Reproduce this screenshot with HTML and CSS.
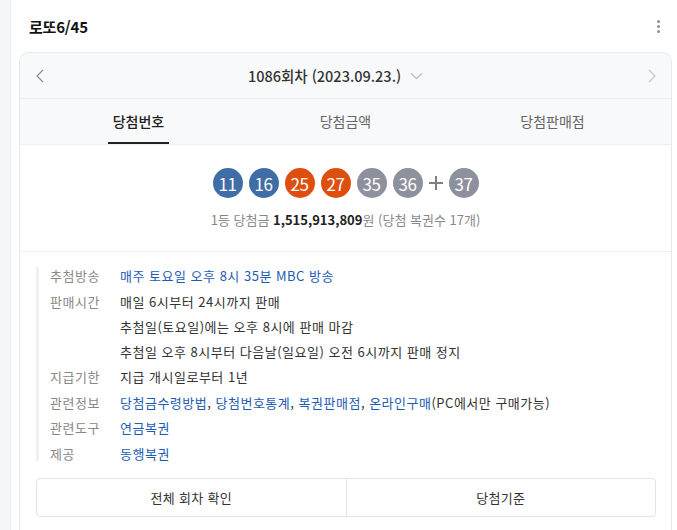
FILE: index.html
```html
<!DOCTYPE html>
<html lang="ko">
<head>
<meta charset="utf-8">
<link rel="stylesheet" href="styles.css">
</head>
<body>
<div class="page">
  <div class="side"></div>
  <div class="main">
    <div class="title-row">
      <h1 class="title">로또6/45</h1>
      <span class="kebab"><i></i><i></i><i></i></span>
    </div>
    <div class="card">
      <div class="draw-head">
        <svg class="arrow" width="8" height="14" viewBox="0 0 8 14"><path d="M7 1 1 7l6 6" fill="none" stroke="#8a8d93" stroke-width="1.2"/></svg>
        <div class="draw-title">
          <span>1086회차 (2023.09.23.)</span>
          <svg width="13" height="8" viewBox="0 0 13 8"><path d="M1 1.5 6.5 6.5 12 1.5" fill="none" stroke="#b8bbc0" stroke-width="1.2"/></svg>
        </div>
        <svg class="arrow" width="8" height="14" viewBox="0 0 8 14"><path d="M1 1l6 6-6 6" fill="none" stroke="#c3c6cb" stroke-width="1.2"/></svg>
      </div>
      <div class="tabs">
        <div class="tab active"><span>당첨번호</span></div>
        <div class="tab"><span>당첨금액</span></div>
        <div class="tab"><span>당첨판매점</span></div>
      </div>
      <div class="result">
        <div class="balls">
          <span class="ball blue">11</span>
          <span class="ball blue">16</span>
          <span class="ball red">25</span>
          <span class="ball red">27</span>
          <span class="ball gray">35</span>
          <span class="ball gray">36</span>
          <svg class="plus" width="14" height="14" viewBox="0 0 14 14"><path d="M7 0v14M0 7h14" stroke="#7d7f84" stroke-width="2"/></svg>
          <span class="ball gray">37</span>
        </div>
        <p class="prize">1등 당첨금 <b>1,515,913,809</b>원 (당첨 복권수 17개)</p>
      </div>
      <div class="info">
        <div class="row"><span class="label">추첨방송</span><div class="val"><span class="link">매주 토요일 오후 8시 35분 MBC 방송</span></div></div>
        <div class="row"><span class="label">판매시간</span><div class="val">매일 6시부터 24시까지 판매<br>추첨일(토요일)에는 오후 8시에 판매 마감<br>추첨일 오후 8시부터 다음날(일요일) 오전 6시까지 판매 정지</div></div>
        <div class="row"><span class="label">지급기한</span><div class="val">지급 개시일로부터 1년</div></div>
        <div class="row"><span class="label">관련정보</span><div class="val"><span class="link">당첨금수령방법</span>, <span class="link">당첨번호통계</span>, <span class="link">복권판매점</span>, <span class="link">온라인구매</span>(PC에서만 구매가능)</div></div>
        <div class="row"><span class="label">관련도구</span><div class="val"><span class="link">연금복권</span></div></div>
        <div class="row"><span class="label">제공</span><div class="val"><span class="link">동행복권</span></div></div>
      </div>
      <div class="buttons">
        <div class="btn">전체 회차 확인</div>
        <div class="btn">당첨기준</div>
      </div>
    </div>
  </div>
</div>
</body>
</html>
```
FILE: styles.css
```css
* { box-sizing: border-box; }
html, body { margin: 0; padding: 0; }
body {
  font-family: "Noto Sans CJK KR", "Noto Sans", sans-serif;
  background: #fff;
  color: #222;
  height: 530px;
  overflow: hidden;
}
.page { display: flex; min-height: 530px; }
.side {
  width: 11px;
  flex: none;
  background: #f5f6f8;
  border-right: 1px solid #eceef1;
}
.main { flex: 1; padding: 0 5px 0 8px; }
.title-row {
  height: 52px;
  display: flex;
  align-items: center;
  justify-content: space-between;
  padding: 0 12px 0 10px;
}
.title { margin: 0; font-size: 15px; font-weight: 700; color: #111; letter-spacing: -0.2px; }
.kebab { display: flex; flex-direction: column; gap: 2px; }
.kebab i { display: block; width: 3px; height: 3px; border-radius: 50%; background: #8b8e94; }
.card {
  border: 1px solid #e6e8eb;
  border-bottom: none;
  border-radius: 10px 10px 0 0;
  min-height: 478px;
}
.draw-head {
  height: 46px;
  display: flex;
  align-items: center;
  padding: 0 15px 0 16px;
  background: #f8f9fa;
  border-radius: 10px 10px 0 0;
  border-bottom: 1px solid #eceef0;
}
.arrow { flex: none; }
.draw-title {
  flex: 1;
  display: flex;
  align-items: center;
  justify-content: center;
  gap: 9px;
  padding-right: 21px;
  font-size: 14.5px;
  font-weight: 500;
  color: #333;
}
.tabs {
  display: flex;
  padding: 0 15px;
  height: 46px;
  background: #f8f9fa;
  border-bottom: 1px solid #eceef0;
}
.tab {
  flex: 1;
  display: flex;
  justify-content: center;
}
.tab span {
  display: flex;
  align-items: center;
  padding: 0 5px;
  font-size: 14px;
  color: #666;
  border-bottom: 2px solid transparent;
}
.tab.active span { color: #222; font-weight: 500; border-bottom-color: #222; }
.result {
  background: #fff;
  padding-top: 23px;
  height: 107px;
  border-bottom: 1px solid #eceef0;
}
.balls { display: flex; justify-content: center; align-items: center; gap: 6px; }
.ball {
  width: 30px; height: 30px;
  border-radius: 50%;
  display: flex; align-items: center; justify-content: center;
  color: #fff;
  font-size: 17px;
  letter-spacing: -0.5px;
}
.ball.blue { background: #3f6ea6; }
.ball.red { background: #de4f0f; }
.ball.gray { background: #8d909d; }
.plus { flex: none; }
.prize {
  margin: 12px 0 0;
  text-align: center;
  font-size: 13px;
  color: #888;
}
.prize b { color: #222; font-weight: 700; }
.info {
  margin: 11px 15px 0 16px;
  padding-left: 14px;
  background: linear-gradient(#eef0f2, #eef0f2) no-repeat 0 4px / 3px calc(100% - 9px);
  font-size: 13px;
  line-height: 25px;
  letter-spacing: 0.5px;
}
.row { display: flex; margin-bottom: 0.5px; }
.label { width: 70px; flex: none; color: #888; }
.val { color: #333; }
.link { color: #1c5cb4; }
.buttons {
  display: flex;
  margin: 12px 15px 0 16px;
  height: 39px;
  border: 1px solid #e2e4e7;
  border-radius: 4px;
}
.btn {
  flex: 1;
  display: flex;
  align-items: center;
  justify-content: center;
  font-size: 13px;
  color: #333;
  letter-spacing: 0.3px;
}
.btn + .btn { border-left: 1px solid #e2e4e7; }
```
